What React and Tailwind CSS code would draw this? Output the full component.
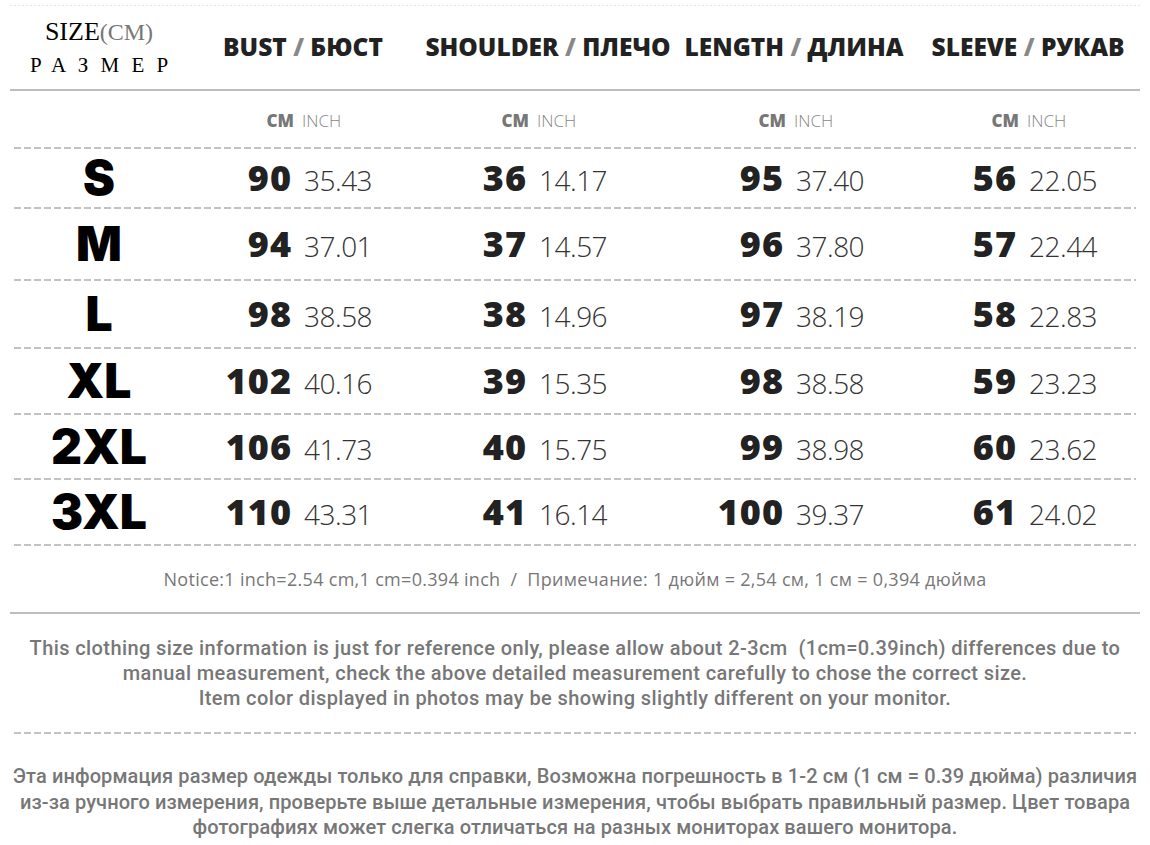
const rows = [
  { size: 'S', h: 'h-[58px]', v: [['90', '35.43'], ['36', '14.17'], ['95', '37.40'], ['56', '22.05']] },
  { size: 'M', h: 'h-[70px]', v: [['94', '37.01'], ['37', '14.57'], ['96', '37.80'], ['57', '22.44']] },
  { size: 'L', h: 'h-[66px]', v: [['98', '38.58'], ['38', '14.96'], ['97', '38.19'], ['58', '22.83']] },
  { size: 'XL', h: 'h-[64px]', v: [['102', '40.16'], ['39', '15.35'], ['98', '38.58'], ['59', '23.23']] },
  { size: '2XL', h: 'h-[63px]', v: [['106', '41.73'], ['40', '15.75'], ['99', '38.98'], ['60', '23.62']] },
  { size: '3XL', h: 'h-[64px]', v: [['110', '43.31'], ['41', '16.14'], ['100', '39.37'], ['61', '24.02']] },
];

const headers = [
  ['BUST', 'БЮСТ'],
  ['SHOULDER', 'ПЛЕЧО'],
  ['LENGTH', 'ДЛИНА'],
  ['SLEEVE', 'РУКАВ'],
];

const Dash = () => (
  <div className="h-[2px] mx-[4px] bg-[repeating-linear-gradient(90deg,#c2c2c2_0px,#c2c2c2_7px,transparent_7px,transparent_10px)]" />
);

const Solid = () => <div className="h-[2px] bg-[#bdbdbd]" />;

const grid = 'grid grid-cols-[178px_220px_250px_264px_202px] items-center';

export default function App() {
  return (
    <div className="w-[1150px] h-[845px] bg-white px-[10px] overflow-hidden font-['Open_Sans',sans-serif]">
      {/* faint dotted top rule */}
      <div className="pt-[5px]">
        <div className="h-px bg-[repeating-linear-gradient(90deg,#e6e6e6_0px,#e6e6e6_2px,transparent_2px,transparent_4px)]" />
      </div>

      {/* Header */}
      <div className="h-[83px] grid grid-cols-[178px_230px_260px_232px_236px] items-center">
        <div className="flex flex-col items-center font-['Liberation_Serif',serif] leading-none">
          <div className="text-[26px] text-black">
            SIZE<span className="text-[#777] text-[24px]">(CM)</span>
          </div>
          <div className="text-[21px] text-black tracking-[0.58em] pl-[0.58em] mt-[10px]">РАЗМЕР</div>
        </div>
        {headers.map(([en, ru]) => (
          <div key={en} className="text-center text-[24.5px] font-extrabold text-[#222] whitespace-nowrap">
            {en} <span className="text-[#888]">/</span> {ru}
          </div>
        ))}
      </div>
      <Solid />

      {/* Units row */}
      <div className={`${grid} h-[56px] pt-[3px]`}>
        <div />
        {headers.map(([en]) => (
          <div key={en} className="grid grid-cols-2 gap-x-2 text-[17px] text-[#777]">
            <span className="text-right font-extrabold">CM</span>
            <span className="text-left font-light text-[#888]">INCH</span>
          </div>
        ))}
      </div>
      <Dash />

      {rows.map((r) => (
        <div key={r.size}>
          <div className={`${grid} ${r.h}`}>
            <div className="text-center font-['Inter',sans-serif] font-black text-[48px] leading-none text-black">
              {r.size}
            </div>
            {r.v.map(([cm, inch], i) => (
              <div key={i} className="grid grid-cols-2 gap-x-3 items-baseline leading-none">
                <span className="text-right font-extrabold text-[36px] tracking-[1px] text-[#222]">{cm}</span>
                <span className="text-left font-light text-[28px] tracking-[-0.5px] text-[#333]">{inch}</span>
              </div>
            ))}
          </div>
          <Dash />
        </div>
      ))}

      {/* Notice */}
      <div className="h-[66px] flex items-center justify-center text-[18px] tracking-[0.3px] text-[#777] whitespace-nowrap">
        Notice:1 inch=2.54 cm,1 cm=0.394 inch&nbsp;&nbsp;/&nbsp;&nbsp;Примечание: 1 дюйм = 2,54 см, 1 см = 0,394 дюйма
      </div>
      <Solid />

      <div className="h-[118px] flex flex-col justify-center text-center font-['Roboto',sans-serif] font-medium text-[20px] tracking-[0.4px] leading-[25px] text-[#777]">
        <p className="whitespace-nowrap">
          This clothing size information is just for reference only, please allow about 2-3cm&nbsp;&nbsp;(1cm=0.39inch) differences due to
        </p>
        <p>manual measurement, check the above detailed measurement carefully to chose the correct size.</p>
        <p>Item color displayed in photos may be showing slightly different on your monitor.</p>
      </div>
      <Dash />

      <div className="h-[111px] pt-[30px] flex flex-col text-center font-['Roboto',sans-serif] font-medium text-[20px] tracking-[0.1px] leading-[25.5px] text-[#777]">
        <p className="whitespace-nowrap">
          Эта информация размер одежды только для справки, Возможна погрешность в 1-2 см (1 см = 0.39 дюйма) различия
        </p>
        <p className="whitespace-nowrap">
          из-за ручного измерения, проверьте выше детальные измерения, чтобы выбрать правильный размер. Цвет товара
        </p>
        <p>фотографиях может слегка отличаться на разных мониторах вашего монитора.</p>
      </div>
    </div>
  );
}
